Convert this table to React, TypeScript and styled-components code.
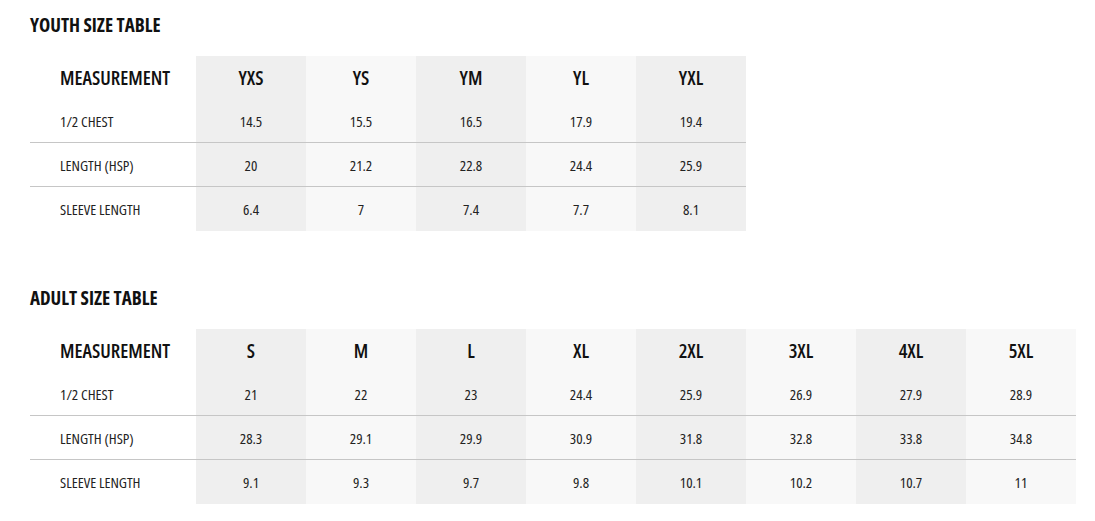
import React from "react";
import styled, { createGlobalStyle } from "styled-components";

const Global = createGlobalStyle`
  html, body { margin: 0; padding: 0; background: #ffffff; }
  body {
    font-family: "Open Sans", "Roboto Condensed", "Liberation Sans", sans-serif;
    font-stretch: 75%;
    color: #1a1a1a;
  }
`;

const Page = styled.div`
  padding: 0 30px;
`;

const Section = styled.section<{ $first?: boolean }>`
  padding-top: ${(p) => (p.$first ? "0" : "42px")};
`;

const Title = styled.h2`
  margin: 0;
  padding-top: 13px;
  padding-bottom: 19px;
  font-size: 19px;
  line-height: 24px;
  font-weight: 700;
  font-stretch: 75%;
  color: #111;
`;

const Table = styled.table<{ $w: number }>`
  width: ${(p) => p.$w}px;
  border-collapse: collapse;
  table-layout: fixed;
`;

const Col = styled.col<{ $w: number }>`
  width: ${(p) => p.$w}px;
`;

const HeadCell = styled.th<{ $shade?: string; $label?: boolean }>`
  height: 43px;
  padding: 0 0 0 ${(p) => (p.$label ? "30px" : "0")};
  text-align: ${(p) => (p.$label ? "left" : "center")};
  background: ${(p) => p.$shade || "#ffffff"};
  font-size: 19.5px;
  font-weight: 600;
  color: #111;
  white-space: nowrap;
`;

const Row = styled.tr<{ $last?: boolean }>`
  border-bottom: ${(p) => (p.$last ? "none" : "1px solid #c6c6c6")};
`;

const Cell = styled.td<{ $shade?: string; $label?: boolean; $tall?: boolean }>`
  height: ${(p) => (p.$tall ? "44px" : "43px")};
  padding: 0 0 0 ${(p) => (p.$label ? "30px" : "0")};
  text-align: ${(p) => (p.$label ? "left" : "center")};
  background: ${(p) => p.$shade || "#ffffff"};
  font-size: 15px;
  font-weight: 400;
  color: #222;
  white-space: nowrap;
`;

type TableData = {
  title: string;
  sizes: string[];
  rows: { label: string; values: string[] }[];
};

const shade = (i: number) => (i % 2 === 0 ? "#efefef" : "#f8f8f8");

const youth: TableData = {
  title: "YOUTH SIZE TABLE",
  sizes: ["YXS", "YS", "YM", "YL", "YXL"],
  rows: [
    { label: "1/2 CHEST", values: ["14.5", "15.5", "16.5", "17.9", "19.4"] },
    { label: "LENGTH (HSP)", values: ["20", "21.2", "22.8", "24.4", "25.9"] },
    { label: "SLEEVE LENGTH", values: ["6.4", "7", "7.4", "7.7", "8.1"] },
  ],
};

const adult: TableData = {
  title: "ADULT SIZE TABLE",
  sizes: ["S", "M", "L", "XL", "2XL", "3XL", "4XL", "5XL"],
  rows: [
    { label: "1/2 CHEST", values: ["21", "22", "23", "24.4", "25.9", "26.9", "27.9", "28.9"] },
    { label: "LENGTH (HSP)", values: ["28.3", "29.1", "29.9", "30.9", "31.8", "32.8", "33.8", "34.8"] },
    { label: "SLEEVE LENGTH", values: ["9.1", "9.3", "9.7", "9.8", "10.1", "10.2", "10.7", "11"] },
  ],
};

const LABEL_W = 166;
const SIZE_W = 110;

function SizeTable({ data, first }: { data: TableData; first?: boolean }) {
  return (
    <Section $first={first}>
      <Title>{data.title}</Title>
      <Table $w={LABEL_W + SIZE_W * data.sizes.length}>
        <colgroup>
          <Col $w={LABEL_W} />
          {data.sizes.map((s) => (
            <Col key={s} $w={SIZE_W} />
          ))}
        </colgroup>
        <thead>
          <tr>
            <HeadCell $label>MEASUREMENT</HeadCell>
            {data.sizes.map((s, i) => (
              <HeadCell key={s} $shade={shade(i)}>
                {s}
              </HeadCell>
            ))}
          </tr>
        </thead>
        <tbody>
          {data.rows.map((r, ri) => {
            const last = ri === data.rows.length - 1;
            return (
              <Row key={r.label} $last={last}>
                <Cell $label $tall={last}>
                  {r.label}
                </Cell>
                {r.values.map((v, i) => (
                  <Cell key={i} $shade={shade(i)} $tall={last}>
                    {v}
                  </Cell>
                ))}
              </Row>
            );
          })}
        </tbody>
      </Table>
    </Section>
  );
}

export default function App() {
  return (
    <Page>
      <Global />
      <SizeTable data={youth} first />
      <SizeTable data={adult} />
    </Page>
  );
}
